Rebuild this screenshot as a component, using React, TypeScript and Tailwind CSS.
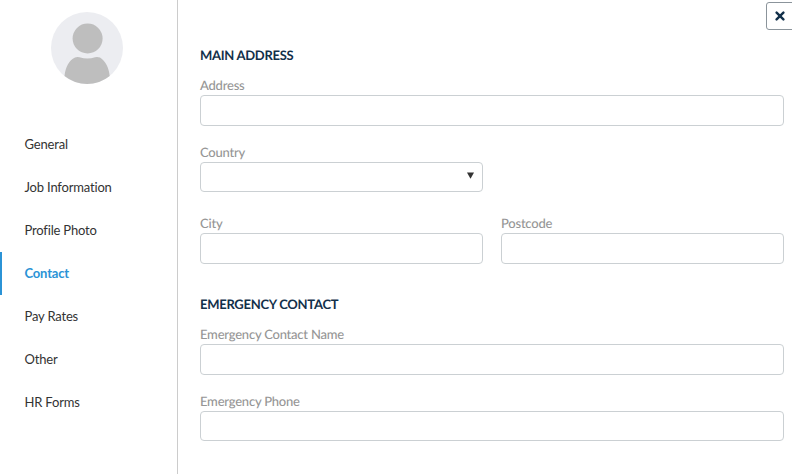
import { useState } from "react";

const tabs = [
  "General",
  "Job Information",
  "Profile Photo",
  "Contact",
  "Pay Rates",
  "Other",
  "HR Forms",
];

const inputStyle =
  "block w-full rounded-[4px] border border-[#cbd0d3] bg-white px-2 text-[13px] text-[#333] outline-none";

const labelStyle =
  "block h-[18px] text-[13px] font-medium leading-[18px] tracking-[-0.22px] text-[#969696]";

const headingStyle =
  "text-[13px] font-bold leading-5 tracking-[-0.28px] text-[#12304a]";

const Avatar = () => (
  <svg className="mx-auto block size-[72px]" viewBox="0 0 72 72">
    <circle cx="36" cy="36" r="36" fill="#ecedf1" />
    <circle cx="36.6" cy="26.5" r="15" fill="#bebebe" />
    <path
      d="M13.5 64C14.5 55 18 48 24 45.4Q26 44.6 28.5 45.2Q36.5 47.6 44 45.2Q46.5 44.4 49 45.6C54.5 49 58 56 58.7 64A36 36 0 0 1 13.5 64Z"
      fill="#bebebe"
    />
  </svg>
);

const Field = ({ label, short }: { label: string; short?: boolean }) => (
  <label className="block">
    <span className={labelStyle}>{label}</span>
    <input
      type="text"
      className={`${inputStyle} mt-px ${short ? "h-[30px]" : "h-[31px]"}`}
    />
  </label>
);

const App = () => {
  const [active, setActive] = useState("Contact");

  return (
    <div className="flex h-[474px] w-[792px] overflow-hidden bg-white font-['Lato',sans-serif] [text-rendering:geometricPrecision]">
      <aside className="w-[178px] shrink-0 border-r border-[#cccccc] pt-3">
        <div className="pr-[3px]">
          <Avatar />
        </div>
        <nav className="mt-[39px]">
          {tabs.map((tab) => (
            <button
              key={tab}
              type="button"
              onClick={() => setActive(tab)}
              className={`flex h-[43px] w-full items-center border-l-2 pl-[22.5px] text-[13px] tracking-[-0.18px] ${
                tab === active
                  ? "border-[#2b93d6] font-bold text-[#2b93d6]"
                  : "border-transparent text-[#333]"
              }`}
            >
              {tab}
            </button>
          ))}
        </nav>
      </aside>

      <main className="relative flex-1 pl-[22px] pr-2 pt-[45px]">
        <button
          type="button"
          aria-label="Close"
          className="absolute right-[-4px] top-[2px] flex h-7 w-[30px] items-center justify-center rounded-[3px] border border-[#8b949b] pr-[2px]"
        >
          <svg className="size-[10px]" viewBox="0 0 10 10">
            <path
              d="M1.6 1.6L8.4 8.4M8.4 1.6L1.6 8.4"
              stroke="#12304a"
              strokeWidth="2.4"
              strokeLinecap="round"
            />
          </svg>
        </button>

        <h2 className={headingStyle}>MAIN ADDRESS</h2>
        <div className="mt-[11px]">
          <Field label="Address" />
        </div>
        <div className="mt-[17px] w-[283px]">
          <label className="block">
            <span className={labelStyle}>Country</span>
            <span className="relative mt-px block">
              <select className={`${inputStyle} h-[30px] appearance-none`} />
              <svg
                className="pointer-events-none absolute right-[9px] top-[10px] h-[7px] w-[7px]"
                viewBox="0 0 7 7"
              >
                <path d="M0 0.5H7L3.5 6.8Z" fill="#333" />
              </svg>
            </span>
          </label>
        </div>
        <div className="mt-[22px] grid grid-cols-2 gap-x-[18px]">
          <Field label="City" />
          <Field label="Postcode" />
        </div>

        <h2 className={`${headingStyle} mt-[30px]`}>EMERGENCY CONTACT</h2>
        <div className="mt-[11px] space-y-[17px]">
          <Field label="Emergency Contact Name" />
          <Field label="Emergency Phone" short />
        </div>
      </main>
    </div>
  );
};

export default App;
